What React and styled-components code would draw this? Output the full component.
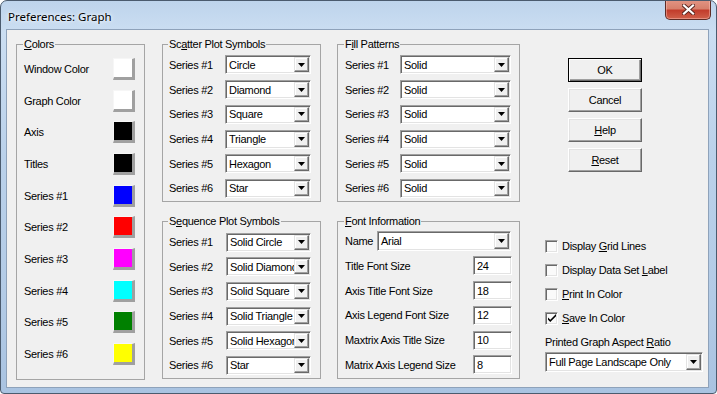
import React from 'react'
import styled, { createGlobalStyle } from 'styled-components'

const GlobalStyle = createGlobalStyle`
    html, body {
        margin: 0;
        padding: 0;
        background: #fff;
    }
    body {
        width: 717px;
        height: 394px;
        overflow: hidden;
        font-family: "Liberation Sans", Arial, sans-serif;
        font-size: 11px;
        letter-spacing: -0.3px;
        color: #000;
    }
`

const Window = styled.div`
    box-sizing: border-box;
    width: 717px;
    height: 394px;
    border: 1px solid #4b5b6e;
    border-radius: 7px 7px 4px 4px;
    background: linear-gradient(180deg, #bed4ec 0%, #cbdef2 8%, #bad1ea 40%, #b3cbe6 75%, #a9c3e1 100%);
    display: flex;
    flex-direction: column;
    overflow: hidden;
`

const TitleBar = styled.div`
    height: 28px;
    flex-shrink: 0;
    display: flex;
    align-items: flex-start;
`

const Title = styled.span`
    align-self: center;
    margin-left: 7px;
    margin-top: 2px;
    font-family: "Noto Sans", "Open Sans", sans-serif;
    font-size: 11.5px;
    letter-spacing: 0;
    text-shadow: 0 0 6px rgba(255, 255, 255, 0.95), 0 0 3px rgba(255, 255, 255, 0.9);
`

const CloseButton = styled.div`
    margin-left: auto;
    margin-right: 5px;
    margin-top: -1px;
    width: 46px;
    height: 20px;
    box-sizing: border-box;
    border: 1px solid #5e2c26;
    border-top: none;
    border-radius: 0 0 5px 5px;
    background: linear-gradient(180deg, #e29584 0%, #d7806c 45%, #c23d2c 55%, #d0604a 100%);
    box-shadow: inset 0 0 0 1px rgba(255, 200, 190, 0.45);
    display: flex;
    align-items: center;
    justify-content: center;
`

const Client = styled.div`
    flex: 1;
    margin: 0 7px 5px 5px;
    border: 1px solid #8ea2ba;
    background: #f0f0f0;
    display: flex;
    align-items: flex-start;
    padding: 7px 0 0 9px;
`

const Column = styled.div`
    display: flex;
    flex-direction: column;
    gap: 12px;
    width: ${p => p.$w}px;
    margin-left: ${p => p.$ml || 0}px;
    flex-shrink: 0;
`

const Group = styled.fieldset`
    box-sizing: border-box;
    margin: 0;
    min-width: 0;
    width: 100%;
    height: ${p => p.$h}px;
    padding: ${p => p.$pad};
    border: 1px solid #a5a5a5;
`

const Legend = styled.legend`
    padding: 0 1px;
    margin-left: -1px;
    line-height: 14px;
`

const U = styled.span`
    text-decoration: underline;
    text-underline-offset: 1px;
`

const ColorRow = styled.div`
    height: 31.7px;
    display: flex;
    align-items: center;
    justify-content: space-between;
`

const Swatch = styled.div`
    box-sizing: border-box;
    width: 22px;
    height: 22px;
    background: ${p => p.$c};
    border-style: solid;
    border-width: 1px 3px 3px 1px;
    border-color: #f6f6f6 #a0a0a0 #a0a0a0 #f6f6f6;
`

const FieldRow = styled.div`
    height: ${p => p.$h || 24.7}px;
    display: grid;
    grid-template-columns: ${p => p.$label}px ${p => p.$field}px;
    align-items: center;
`

const Sunken = styled.div`
    box-sizing: border-box;
    height: ${p => p.$h || 19}px;
    border: 1px solid;
    border-color: #a0a0a0 #fff #fff #a0a0a0;
    box-shadow: inset 1px 1px 0 #696969, inset -1px -1px 0 #e3e3e3;
    background: #fff;
    padding: 1px;
    display: flex;
    align-items: center;
`

const FieldText = styled.span`
    flex: 1;
    min-width: 0;
    padding-left: 2px;
    white-space: nowrap;
    overflow: hidden;
`

const DropButton = styled.div`
    box-sizing: border-box;
    width: 15px;
    align-self: stretch;
    flex-shrink: 0;
    background: #f0f0f0;
    border: 1px solid;
    border-color: #e3e3e3 #696969 #696969 #e3e3e3;
    box-shadow: inset -1px -1px 0 #a0a0a0, inset 1px 1px 0 #fff;
    display: flex;
    align-items: center;
    justify-content: center;
`

const RightColumn = styled.div`
    width: 160px;
    margin-left: 25px;
    display: flex;
    flex-direction: column;
    flex-shrink: 0;
`

const ButtonStack = styled.div`
    margin: 21px 0 0 23px;
    display: flex;
    flex-direction: column;
    gap: 6px;
`

const Button = styled.div`
    box-sizing: border-box;
    width: 74px;
    height: 24px;
    background: #f0f0f0;
    border: 1px solid;
    border-color: ${p => (p.$default ? '#000' : '#fff #696969 #696969 #fff')};
    box-shadow: ${p =>
        p.$default
            ? 'inset 1px 1px 0 #fff, inset -1px -1px 0 #696969, inset -2px -2px 0 #a0a0a0'
            : 'inset -1px -1px 0 #a0a0a0, inset 1px 1px 0 #e3e3e3'};
    display: flex;
    align-items: center;
    justify-content: center;
`

const Checks = styled.div`
    margin-top: 62px;
    display: flex;
    flex-direction: column;
`

const CheckRow = styled.div`
    height: 24px;
    display: flex;
    align-items: center;
    gap: 4px;
`

const CheckBox = styled.div`
    box-sizing: border-box;
    width: 13px;
    height: 13px;
    border: 1px solid;
    border-color: #a0a0a0 #fff #fff #a0a0a0;
    box-shadow: inset 1px 1px 0 #696969, inset -1px -1px 0 #e3e3e3;
    background: #fafafa;
    display: flex;
    align-items: center;
    justify-content: center;
`

const RatioLabel = styled.div`
    margin-top: 5px;
    line-height: 14px;
`

const RatioCombo = styled.div`
    margin-top: 3px;
    width: 158px;
`

const Arrow = () => (
    <svg width="7" height="4" viewBox="0 0 7 4">
        <path d="M0 0h7L3.5 4z" fill="#000" />
    </svg>
)

const Combo = ({ value, h }) => (
    <Sunken $h={h}>
        <FieldText>{value}</FieldText>
        <DropButton>
            <Arrow />
        </DropButton>
    </Sunken>
)

const colorRows = [
    ['Window Color', '#ffffff'],
    ['Graph Color', '#ffffff'],
    ['Axis', '#000000'],
    ['Titles', '#000000'],
    ['Series #1', '#0000ff'],
    ['Series #2', '#ff0000'],
    ['Series #3', '#ff00ff'],
    ['Series #4', '#00ffff'],
    ['Series #5', '#008000'],
    ['Series #6', '#ffff00'],
]

const scatter = ['Circle', 'Diamond', 'Square', 'Triangle', 'Hexagon', 'Star']
const sequence = ['Solid Circle', 'Solid Diamond', 'Solid Square', 'Solid Triangle', 'Solid Hexagon', 'Star']

const fontSizes = [
    ['Title Font Size', '24'],
    ['Axis Title Font Size', '18'],
    ['Axis Legend Font Size', '12'],
    ['Maxtrix Axis Title Size', '10'],
    ['Matrix Axis Legend Size', '8'],
]

const checks = [
    [<>Display <U>G</U>rid Lines</>, false],
    [<>Display Data Set <U>L</U>abel</>, false],
    [<><U>P</U>rint In Color</>, false],
    [<><U>S</U>ave In Color</>, true],
]

const SeriesGroup = ({ legend, items, h, label, field, pad }) => (
    <Group $h={h} $pad={pad}>
        <Legend>{legend}</Legend>
        {items.map((v, i) => (
            <FieldRow key={i} $label={label} $field={field}>
                <span>Series #{i + 1}</span>
                <Combo value={v} />
            </FieldRow>
        ))}
    </Group>
)

const App = () => (
    <Window>
        <GlobalStyle />
        <TitleBar>
            <Title>Preferences: Graph</Title>
            <CloseButton>
                <svg width="13" height="11" viewBox="0 0 13 11">
                    <path d="M2 1.5l9 8M11 1.5l-9 8" stroke="#5a2620" strokeWidth="4" strokeLinecap="square" />
                    <path d="M2 1.5l9 8M11 1.5l-9 8" stroke="#fff" strokeWidth="2.2" strokeLinecap="square" />
                </svg>
            </CloseButton>
        </TitleBar>
        <Client>
            <Column $w={129}>
                <Group $h={343} $pad="2px 9px 0 7px">
                    <Legend>
                        <U>C</U>olors
                    </Legend>
                    {colorRows.map(([name, c]) => (
                        <ColorRow key={name}>
                            <span>{name}</span>
                            <Swatch $c={c} />
                        </ColorRow>
                    ))}
                </Group>
            </Column>
            <Column $w={159} $ml={17}>
                <SeriesGroup
                    legend={<>Sc<U>a</U>tter Plot Symbols</>}
                    items={scatter}
                    h={165}
                    label={56}
                    field={86}
                    pad="1.6px 8px 0 6px"
                />
                <SeriesGroup
                    legend={<>S<U>e</U>quence Plot Symbols</>}
                    items={sequence}
                    h={165}
                    label={57}
                    field={85}
                    pad="1.7px 8px 0 6px"
                />
            </Column>
            <Column $w={183} $ml={16}>
                <SeriesGroup
                    legend={<>F<U>i</U>ll Patterns</>}
                    items={Array(6).fill('Solid')}
                    h={165}
                    label={55}
                    field={111}
                    pad="1.6px 8px 0 7px"
                />
                <Group $h={165} $pad="0.6px 8px 0 7px">
                    <Legend>
                        <U>F</U>ont Information
                    </Legend>
                    <FieldRow $label={32} $field={134} $h={25}>
                        <span>Name</span>
                        <Combo value="Arial" h={20} />
                    </FieldRow>
                    {fontSizes.map(([name, v]) => (
                        <FieldRow key={name} $label={128} $field={39} $h={24.7}>
                            <span>{name}</span>
                            <Sunken>
                                <FieldText>{v}</FieldText>
                            </Sunken>
                        </FieldRow>
                    ))}
                </Group>
            </Column>
            <RightColumn>
                <ButtonStack>
                    <Button $default>OK</Button>
                    <Button>Cancel</Button>
                    <Button>
                        <span>
                            <U>H</U>elp
                        </span>
                    </Button>
                    <Button>
                        <span>
                            <U>R</U>eset
                        </span>
                    </Button>
                </ButtonStack>
                <Checks>
                    {checks.map(([label, on], i) => (
                        <CheckRow key={i}>
                            <CheckBox>
                                {on && (
                                    <svg width="8" height="8" viewBox="0 0 7 7">
                                        <path d="M0 3l2 2 5-5v2l-5 5-2-2z" fill="#000" />
                                    </svg>
                                )}
                            </CheckBox>
                            <span>{label}</span>
                        </CheckRow>
                    ))}
                </Checks>
                <RatioLabel>
                    Printed Graph Aspect <U>R</U>atio
                </RatioLabel>
                <RatioCombo>
                    <Combo value="Full Page Landscape Only" h={20} />
                </RatioCombo>
            </RightColumn>
        </Client>
    </Window>
)

export default App
